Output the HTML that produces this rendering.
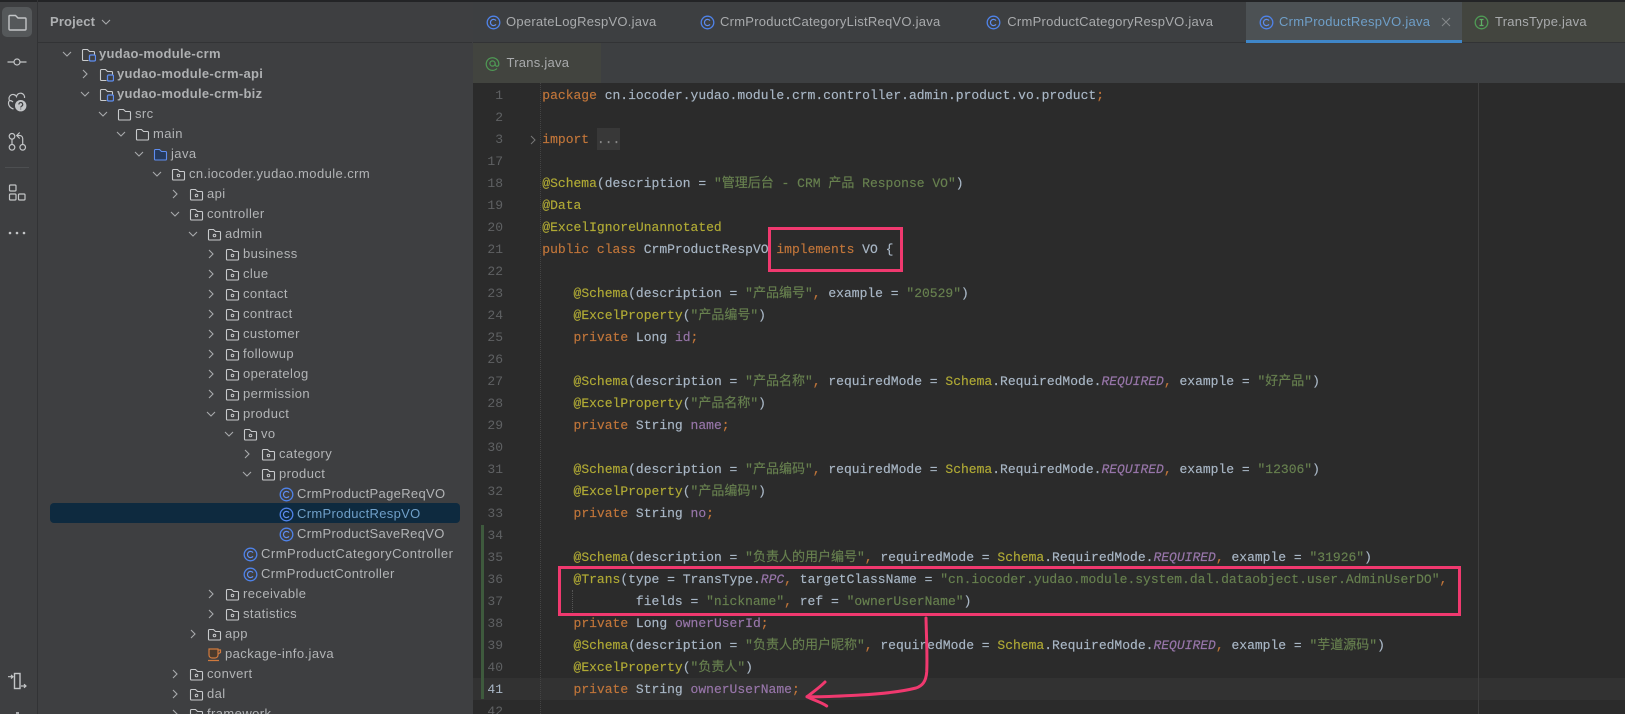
<!DOCTYPE html>
<html><head><meta charset="utf-8"><style>
html,body{margin:0;padding:0;width:1625px;height:714px;overflow:hidden;background:#3e3f41}
#app{position:relative;width:1625px;height:714px;overflow:hidden;font-family:"Liberation Sans","Noto Sans CJK SC",sans-serif}
.abs{position:absolute}
.top{left:0;top:0;width:1625px;height:2px;background:#232426}
.lb{left:37px;top:0;width:1px;height:714px;background:#323335}
.hd{left:38px;top:42px;width:434px;height:1px;background:#323335}
.bi{position:absolute;left:5px;width:24px;height:24px;fill:none;stroke:#c3c5c7;stroke-width:1.2;overflow:visible}
.r{position:absolute;left:0;height:20px;top:calc(43.5px + 20px*var(--n));width:472px;font-size:13px;line-height:20px;color:#b2b4b6;white-space:nowrap;letter-spacing:.42px}
.r>svg{position:absolute;fill:none}
.r .ch{left:calc(61px + 18px*var(--l));top:4px;width:12px;height:12px;stroke:#a8aaac;stroke-width:1.1}
.r .ic{left:calc(81px + 18px*var(--l));top:3px;width:15px;height:15px}
.r span{position:absolute;left:calc(99px + 18px*var(--l));top:0}
.b{font-weight:bold;letter-spacing:.3px;color:#aeb0b2}
.sel{left:50px;top:503px;width:410px;height:20px;background:#0e2a3f;border-radius:4px}
.tabs{left:473px;top:2px;width:1152px;height:81px;background:#3d3f41}
.tl{left:473px;top:42px;width:1152px;height:1px;background:#323335}
.tab{position:absolute;font-size:13px;line-height:20px;color:#a9abad;white-space:nowrap;letter-spacing:.25px}
.ti{position:absolute;width:15px;height:15px;fill:none}
.act{left:1246px;top:2px;width:216px;height:38px;background:#4c5154}
.ul{left:1246px;top:40px;width:216px;height:3px;background:#3f86c8}
.tt{left:1462px;top:2px;width:163px;height:40px;background:#43453f}
.tr{left:473px;top:43px;width:128px;height:40px;background:#42443f}
.ed{left:473px;top:83px;width:1152px;height:631px;background:#2b2b2b}
.cl{left:473px;top:678px;width:1152px;height:22px;background:#323232}
.gl{left:539.5px;top:83px;width:0;height:631px;border-left:1px dotted #444}
.rm{left:1478px;top:83px;width:1px;height:631px;background:#3f3f3f}
.gb{left:481px;top:525px;width:3px;height:174px;background:#3e5a3d}
.n{position:absolute;left:473px;width:30px;text-align:right;height:22px;font:13px/22px "Liberation Mono",monospace;color:#5f6163;top:calc(85px + 22px*var(--i))}
.c{position:absolute;left:542.3px;height:22px;font:13px/22px "Liberation Mono","Noto Sans CJK SC",monospace;color:#a9b7c6;white-space:pre;top:calc(85px + 22px*var(--i));-webkit-text-stroke:.15px}
.k{color:#c2763a}.a{color:#b0aa35}.s{color:#67804f}.f{color:#9876aa}.i{color:#9876aa;font-style:italic}
.fold{left:528.500px;top:134.500px;width:8px;height:10px;fill:none;stroke:#777}
.ell{left:596.700px;top:128px;width:23.500px;height:22px;background:#383838}
.pink{position:absolute;border:3px solid #f0396f;box-sizing:border-box}
</style></head><body><div id="app">
<svg width="0" height="0" style="position:absolute"><defs>
<symbol id="v" viewBox="0 0 12 12"><path d="M2 4l4 4 4-4"/></symbol>
<symbol id="g" viewBox="0 0 12 12"><path d="M4 2l4 4-4 4"/></symbol>
<symbol id="fo" viewBox="0 0 15 15"><path d="M2.500 2.500h4l2 2h4a1 1 0 0 1 1 1v6.500a1 1 0 0 1-1 1h-10a1 1 0 0 1-1-1v-8.500a1 1 0 0 1 1-1z" stroke="#c8cacc" stroke-width="1.100"/></symbol>
<symbol id="pk" viewBox="0 0 15 15"><path d="M2.500 2.500h4l2 2h4a1 1 0 0 1 1 1v6.500a1 1 0 0 1-1 1h-10a1 1 0 0 1-1-1v-8.500a1 1 0 0 1 1-1z" stroke="#c8cacc" stroke-width="1.100"/><circle cx="7.500" cy="8.500" r="1.300" stroke="#c8cacc"/></symbol>
<symbol id="jf" viewBox="0 0 15 15"><path d="M2.500 2.500h4l2 2h4a1 1 0 0 1 1 1v6.500a1 1 0 0 1-1 1h-10a1 1 0 0 1-1-1v-8.500a1 1 0 0 1 1-1z" fill="#263a5c" stroke="#5e8df0" stroke-width="1.100"/></symbol>
<symbol id="md" viewBox="0 0 15 15"><path d="M7.500 13.500h-5a1 1 0 0 1-1-1v-9a1 1 0 0 1 1-1h4l2 2h4a1 1 0 0 1 1 1v2" stroke="#c8cacc" stroke-width="1.100"/><rect x="8.500" y="8" width="6" height="6" rx="1.300" stroke="#5e8df0" stroke-width="1.300"/></symbol>
<symbol id="cc" viewBox="0 0 15 15"><circle cx="7.500" cy="7.500" r="6.300" stroke="#4f83ea" stroke-width="1.300"/><path d="M10 5.600a3.100 3.100 0 1 0 0 3.800" stroke="#5e8df0" stroke-width="1.200"/></symbol>
<symbol id="ii" viewBox="0 0 15 15"><circle cx="7.500" cy="7.500" r="6.300" stroke="#4f9a55" stroke-width="1.300"/><path d="M5.500 4.500h4M5.500 10.500h4M7.500 4.500v6" stroke="#5fae65" stroke-width="1.300"/></symbol>
<symbol id="at" viewBox="0 0 15 15"><path d="M12 12.500a6.300 6.300 0 1 1 1.800-5v1a1.800 1.800 0 0 1-3.600 0v-1" stroke="#4f9a55" stroke-width="1.200"/><circle cx="7.500" cy="7.500" r="2.600" stroke="#4f9a55" stroke-width="1.200"/></symbol>
<symbol id="cup" viewBox="0 0 15 15"><path d="M2 2h9v6a3 3 0 0 1-3 3h-3a3 3 0 0 1-3-3z" fill="#4a3a2c" stroke="#d07a3e" stroke-width="1.200"/><path d="M11 3h2.500v2.500l-2.500 1.500M1 13.500h11" stroke="#d07a3e" stroke-width="1.200"/></symbol>
</defs></svg>

<div class="abs top"></div>
<div class="abs lb"></div><div class="abs hd"></div>
<div class="abs" style="left:2px;top:7px;width:30px;height:30px;border-radius:5px;background:#55585a"></div>
<svg class="bi" style="top:10px" viewBox="0 0 24 24"><path d="M4.500 5.500h6l2.500 2.500h7a1 1 0 0 1 1 1v10a1 1 0 0 1-1 1h-15a1 1 0 0 1-1-1v-12.500a1 1 0 0 1 1-1z" stroke-width="1.400"/></svg>
<svg class="bi" style="top:50px" viewBox="0 0 24 24"><circle cx="12" cy="12" r="3"/><path d="M2.500 12h6.500M15 12h6.500"/></svg>
<svg class="bi" style="top:90px" viewBox="0 0 24 24" stroke-width="1.400"><path d="M4.500 10.500a4 4 0 1 1 7-4a4 4 0 0 1 8 1.500M4.500 10.500c-2 2.500-1 7 4 8.500M8 12a5 5 0 0 0-3.500-1.500"/><circle cx="15.700" cy="15.700" r="5.700" fill="#c3c5c7" stroke="none"/><path d="M13.900 14.500a1.900 1.900 0 1 1 2.800 1.600c-.7.400-1 .7-1 1.400M15.700 18.600v.8" stroke="#3e3f41" stroke-width="1.200"/></svg>
<svg class="bi" style="top:124px" viewBox="0 0 24 24" stroke-width="1.300"><circle cx="7" cy="12.300" r="2.800"/><circle cx="7" cy="23.300" r="2.800"/><circle cx="17.700" cy="23.300" r="2.800"/><path d="M7 15.100v5.400M17.700 20.500v-6a3 3 0 0 0-3-3h-2.700M14.700 8.500l-3 3 3 3"/></svg>
<div class="abs" style="left:5px;top:167px;width:24px;height:1px;background:#4d4f51"></div>
<svg class="bi" style="top:180px" viewBox="0 0 24 24"><rect x="4.500" y="5" width="6.500" height="6" rx="1"/><rect x="4.500" y="14" width="6.500" height="6" rx="1"/><rect x="13.500" y="14" width="6.500" height="6" rx="1"/></svg>
<svg class="bi" style="top:221px" viewBox="0 0 24 24"><circle cx="5" cy="12" r="1.300" fill="#c3c5c7" stroke="none"/><circle cx="12" cy="12" r="1.300" fill="#c3c5c7" stroke="none"/><circle cx="19" cy="12" r="1.300" fill="#c3c5c7" stroke="none"/></svg>
<svg class="bi" style="top:670px" viewBox="0 0 24 24"><rect x="9.500" y="3.500" width="5.500" height="15" stroke-width="1.400"/><path d="M3 6.700h5M6 4.900l2 1.800-2 1.800M16 16h5M19 14.200l2 1.800-2 1.800"/></svg>
<div class="abs" style="left:15.500px;top:712px;width:3px;height:2px;background:#a8aaac"></div>
<div class="abs" style="left:50px;top:12px;font-size:13px;line-height:20px;font-weight:bold;color:#aeb0b2;letter-spacing:.15px">Project</div>
<svg class="abs" style="left:100px;top:16px;width:12px;height:12px;fill:none;stroke:#a8aaac;stroke-width:1.100"><use href="#v"/></svg>

<div class="abs sel"></div>
<div class="r" style="--n:0;--l:0"><svg class="ch"><use href="#v"/></svg><svg class="ic"><use href="#md"/></svg><span class="b">yudao-module-crm</span></div>
<div class="r" style="--n:1;--l:1"><svg class="ch"><use href="#g"/></svg><svg class="ic"><use href="#md"/></svg><span class="b">yudao-module-crm-api</span></div>
<div class="r" style="--n:2;--l:1"><svg class="ch"><use href="#v"/></svg><svg class="ic"><use href="#md"/></svg><span class="b">yudao-module-crm-biz</span></div>
<div class="r" style="--n:3;--l:2"><svg class="ch"><use href="#v"/></svg><svg class="ic"><use href="#fo"/></svg><span>src</span></div>
<div class="r" style="--n:4;--l:3"><svg class="ch"><use href="#v"/></svg><svg class="ic"><use href="#fo"/></svg><span>main</span></div>
<div class="r" style="--n:5;--l:4"><svg class="ch"><use href="#v"/></svg><svg class="ic"><use href="#jf"/></svg><span>java</span></div>
<div class="r" style="--n:6;--l:5"><svg class="ch"><use href="#v"/></svg><svg class="ic"><use href="#pk"/></svg><span>cn.iocoder.yudao.module.crm</span></div>
<div class="r" style="--n:7;--l:6"><svg class="ch"><use href="#g"/></svg><svg class="ic"><use href="#pk"/></svg><span>api</span></div>
<div class="r" style="--n:8;--l:6"><svg class="ch"><use href="#v"/></svg><svg class="ic"><use href="#pk"/></svg><span>controller</span></div>
<div class="r" style="--n:9;--l:7"><svg class="ch"><use href="#v"/></svg><svg class="ic"><use href="#pk"/></svg><span>admin</span></div>
<div class="r" style="--n:10;--l:8"><svg class="ch"><use href="#g"/></svg><svg class="ic"><use href="#pk"/></svg><span>business</span></div>
<div class="r" style="--n:11;--l:8"><svg class="ch"><use href="#g"/></svg><svg class="ic"><use href="#pk"/></svg><span>clue</span></div>
<div class="r" style="--n:12;--l:8"><svg class="ch"><use href="#g"/></svg><svg class="ic"><use href="#pk"/></svg><span>contact</span></div>
<div class="r" style="--n:13;--l:8"><svg class="ch"><use href="#g"/></svg><svg class="ic"><use href="#pk"/></svg><span>contract</span></div>
<div class="r" style="--n:14;--l:8"><svg class="ch"><use href="#g"/></svg><svg class="ic"><use href="#pk"/></svg><span>customer</span></div>
<div class="r" style="--n:15;--l:8"><svg class="ch"><use href="#g"/></svg><svg class="ic"><use href="#pk"/></svg><span>followup</span></div>
<div class="r" style="--n:16;--l:8"><svg class="ch"><use href="#g"/></svg><svg class="ic"><use href="#pk"/></svg><span>operatelog</span></div>
<div class="r" style="--n:17;--l:8"><svg class="ch"><use href="#g"/></svg><svg class="ic"><use href="#pk"/></svg><span>permission</span></div>
<div class="r" style="--n:18;--l:8"><svg class="ch"><use href="#v"/></svg><svg class="ic"><use href="#pk"/></svg><span>product</span></div>
<div class="r" style="--n:19;--l:9"><svg class="ch"><use href="#v"/></svg><svg class="ic"><use href="#pk"/></svg><span>vo</span></div>
<div class="r" style="--n:20;--l:10"><svg class="ch"><use href="#g"/></svg><svg class="ic"><use href="#pk"/></svg><span>category</span></div>
<div class="r" style="--n:21;--l:10"><svg class="ch"><use href="#v"/></svg><svg class="ic"><use href="#pk"/></svg><span>product</span></div>
<div class="r" style="--n:22;--l:11;letter-spacing:.32px"><svg class="ic"><use href="#cc"/></svg><span>CrmProductPageReqVO</span></div>
<div class="r" style="--n:23;--l:11;letter-spacing:.32px"><svg class="ic"><use href="#cc"/></svg><span style="color:#6f9fc8">CrmProductRespVO</span></div>
<div class="r" style="--n:24;--l:11;letter-spacing:.32px"><svg class="ic"><use href="#cc"/></svg><span>CrmProductSaveReqVO</span></div>
<div class="r" style="--n:25;--l:9;letter-spacing:.5px"><svg class="ic"><use href="#cc"/></svg><span>CrmProductCategoryController</span></div>
<div class="r" style="--n:26;--l:9;letter-spacing:.4px"><svg class="ic"><use href="#cc"/></svg><span>CrmProductController</span></div>
<div class="r" style="--n:27;--l:8"><svg class="ch"><use href="#g"/></svg><svg class="ic"><use href="#pk"/></svg><span>receivable</span></div>
<div class="r" style="--n:28;--l:8"><svg class="ch"><use href="#g"/></svg><svg class="ic"><use href="#pk"/></svg><span>statistics</span></div>
<div class="r" style="--n:29;--l:7"><svg class="ch"><use href="#g"/></svg><svg class="ic"><use href="#pk"/></svg><span>app</span></div>
<div class="r" style="--n:30;--l:7"><svg class="ic"><use href="#cup"/></svg><span>package-info.java</span></div>
<div class="r" style="--n:31;--l:6"><svg class="ch"><use href="#g"/></svg><svg class="ic"><use href="#pk"/></svg><span>convert</span></div>
<div class="r" style="--n:32;--l:6"><svg class="ch"><use href="#g"/></svg><svg class="ic"><use href="#pk"/></svg><span>dal</span></div>
<div class="r" style="--n:33;--l:6"><svg class="ch"><use href="#g"/></svg><svg class="ic"><use href="#pk"/></svg><span>framework</span></div>

<div class="abs tabs"></div><div class="abs tt"></div><div class="abs tr"></div><div class="abs act"></div><div class="abs tl"></div><div class="abs ul"></div>
<svg class="ti" style="left:485.500px;top:14.500px"><use href="#cc"/></svg><div class="tab" style="left:506px;top:12px">OperateLogRespVO.java</div>
<svg class="ti" style="left:699.500px;top:14.500px"><use href="#cc"/></svg><div class="tab" style="left:720px;top:12px">CrmProductCategoryListReqVO.java</div>
<svg class="ti" style="left:986px;top:14.500px"><use href="#cc"/></svg><div class="tab" style="left:1007.300px;top:12px">CrmProductCategoryRespVO.java</div>
<svg class="ti" style="left:1258.500px;top:14.500px"><use href="#cc"/></svg><div class="tab" style="left:1279px;top:12px;color:#6f9fc8">CrmProductRespVO.java</div>
<svg class="abs" style="left:1441px;top:17px;width:10px;height:10px;stroke:#85888a;stroke-width:1"><path d="M1 1l8 8M9 1l-8 8"/></svg>
<svg class="ti" style="left:1473.500px;top:14.500px"><use href="#ii"/></svg><div class="tab" style="left:1495px;top:12px">TransType.java</div>
<svg class="ti" style="left:485.200px;top:55.500px"><use href="#at"/></svg><div class="tab" style="left:506.500px;top:53px">Trans.java</div>

<div class="abs ed"></div><div class="abs cl"></div><div class="abs gl"></div><div class="abs rm"></div><div class="abs gb"></div>
<svg class="abs fold" viewBox="0 0 8 10"><path d="M2 1l4 4-4 4"/></svg><div class="abs ell"></div>
<div class="abs" style="left:572px;top:590px;width:0;height:22px;border-left:1px dotted #555"></div>

<div class="n" style="--i:0">1</div><div class="c" style="--i:0"><span class="k">package</span> cn.iocoder.yudao.module.crm.controller.admin.product.vo.product<span class="k">;</span></div>
<div class="n" style="--i:1">2</div>
<div class="n" style="--i:2">3</div><div class="c" style="--i:2"><span class="k">import</span> <span style="color:#888">...</span></div>
<div class="n" style="--i:3">17</div>
<div class="n" style="--i:4">18</div><div class="c" style="--i:4"><span class="a">@Schema</span>(description = <span class="s">"管理后台 - CRM 产品 Response VO"</span>)</div>
<div class="n" style="--i:5">19</div><div class="c" style="--i:5"><span class="a">@Data</span></div>
<div class="n" style="--i:6">20</div><div class="c" style="--i:6"><span class="a">@ExcelIgnoreUnannotated</span></div>
<div class="n" style="--i:7">21</div><div class="c" style="--i:7"><span class="k">public class</span> CrmProductRespVO <span class="k">implements</span> VO {</div>
<div class="n" style="--i:8">22</div>
<div class="n" style="--i:9">23</div><div class="c" style="--i:9">    <span class="a">@Schema</span>(description = <span class="s">"产品编号"</span><span class="k">,</span> example = <span class="s">"20529"</span>)</div>
<div class="n" style="--i:10">24</div><div class="c" style="--i:10">    <span class="a">@ExcelProperty</span>(<span class="s">"产品编号"</span>)</div>
<div class="n" style="--i:11">25</div><div class="c" style="--i:11">    <span class="k">private</span> Long <span class="f">id</span><span class="k">;</span></div>
<div class="n" style="--i:12">26</div>
<div class="n" style="--i:13">27</div><div class="c" style="--i:13">    <span class="a">@Schema</span>(description = <span class="s">"产品名称"</span><span class="k">,</span> requiredMode = <span class="a">Schema</span>.RequiredMode.<span class="i">REQUIRED</span><span class="k">,</span> example = <span class="s">"好产品"</span>)</div>
<div class="n" style="--i:14">28</div><div class="c" style="--i:14">    <span class="a">@ExcelProperty</span>(<span class="s">"产品名称"</span>)</div>
<div class="n" style="--i:15">29</div><div class="c" style="--i:15">    <span class="k">private</span> String <span class="f">name</span><span class="k">;</span></div>
<div class="n" style="--i:16">30</div>
<div class="n" style="--i:17">31</div><div class="c" style="--i:17">    <span class="a">@Schema</span>(description = <span class="s">"产品编码"</span><span class="k">,</span> requiredMode = <span class="a">Schema</span>.RequiredMode.<span class="i">REQUIRED</span><span class="k">,</span> example = <span class="s">"12306"</span>)</div>
<div class="n" style="--i:18">32</div><div class="c" style="--i:18">    <span class="a">@ExcelProperty</span>(<span class="s">"产品编码"</span>)</div>
<div class="n" style="--i:19">33</div><div class="c" style="--i:19">    <span class="k">private</span> String <span class="f">no</span><span class="k">;</span></div>
<div class="n" style="--i:20">34</div>
<div class="n" style="--i:21">35</div><div class="c" style="--i:21">    <span class="a">@Schema</span>(description = <span class="s">"负责人的用户编号"</span><span class="k">,</span> requiredMode = <span class="a">Schema</span>.RequiredMode.<span class="i">REQUIRED</span><span class="k">,</span> example = <span class="s">"31926"</span>)</div>
<div class="n" style="--i:22">36</div><div class="c" style="--i:22">    <span class="a">@Trans</span>(type = TransType.<span class="i">RPC</span><span class="k">,</span> targetClassName = <span class="s">"cn.iocoder.yudao.module.system.dal.dataobject.user.AdminUserDO"</span><span class="k">,</span></div>
<div class="n" style="--i:23">37</div><div class="c" style="--i:23">            fields = <span class="s">"nickname"</span><span class="k">,</span> ref = <span class="s">"ownerUserName"</span>)</div>
<div class="n" style="--i:24">38</div><div class="c" style="--i:24">    <span class="k">private</span> Long <span class="f">ownerUserId</span><span class="k">;</span></div>
<div class="n" style="--i:25">39</div><div class="c" style="--i:25">    <span class="a">@Schema</span>(description = <span class="s">"负责人的用户昵称"</span><span class="k">,</span> requiredMode = <span class="a">Schema</span>.RequiredMode.<span class="i">REQUIRED</span><span class="k">,</span> example = <span class="s">"芋道源码"</span>)</div>
<div class="n" style="--i:26">40</div><div class="c" style="--i:26">    <span class="a">@ExcelProperty</span>(<span class="s">"负责人"</span>)</div>
<div class="n" style="--i:27"><span style="color:#a9b7c6">41</span></div><div class="c" style="--i:27">    <span class="k">private</span> String <span class="f">ownerUserName</span><span class="k">;</span></div>
<div class="n" style="--i:28">42</div>

<div class="pink" style="left:768px;top:227px;width:135px;height:45px"></div>
<div class="pink" style="left:558px;top:566px;width:903px;height:50px"></div>
<svg class="abs" style="left:0;top:0;width:1625px;height:714px;fill:none;stroke:#f0396f;stroke-width:3;stroke-linecap:round;stroke-linejoin:round" viewBox="0 0 1625 714"><path d="M926 618C926.500 640 927.500 655 926.700 672C926 682 922 686 916 688C900 692 880 694 860 695C840 696 825 697 807 696.700"/><path d="M825 682C819 688 813 692 807 696.700C813 700 821 702 826.700 706"/></svg>
</div></body></html>
